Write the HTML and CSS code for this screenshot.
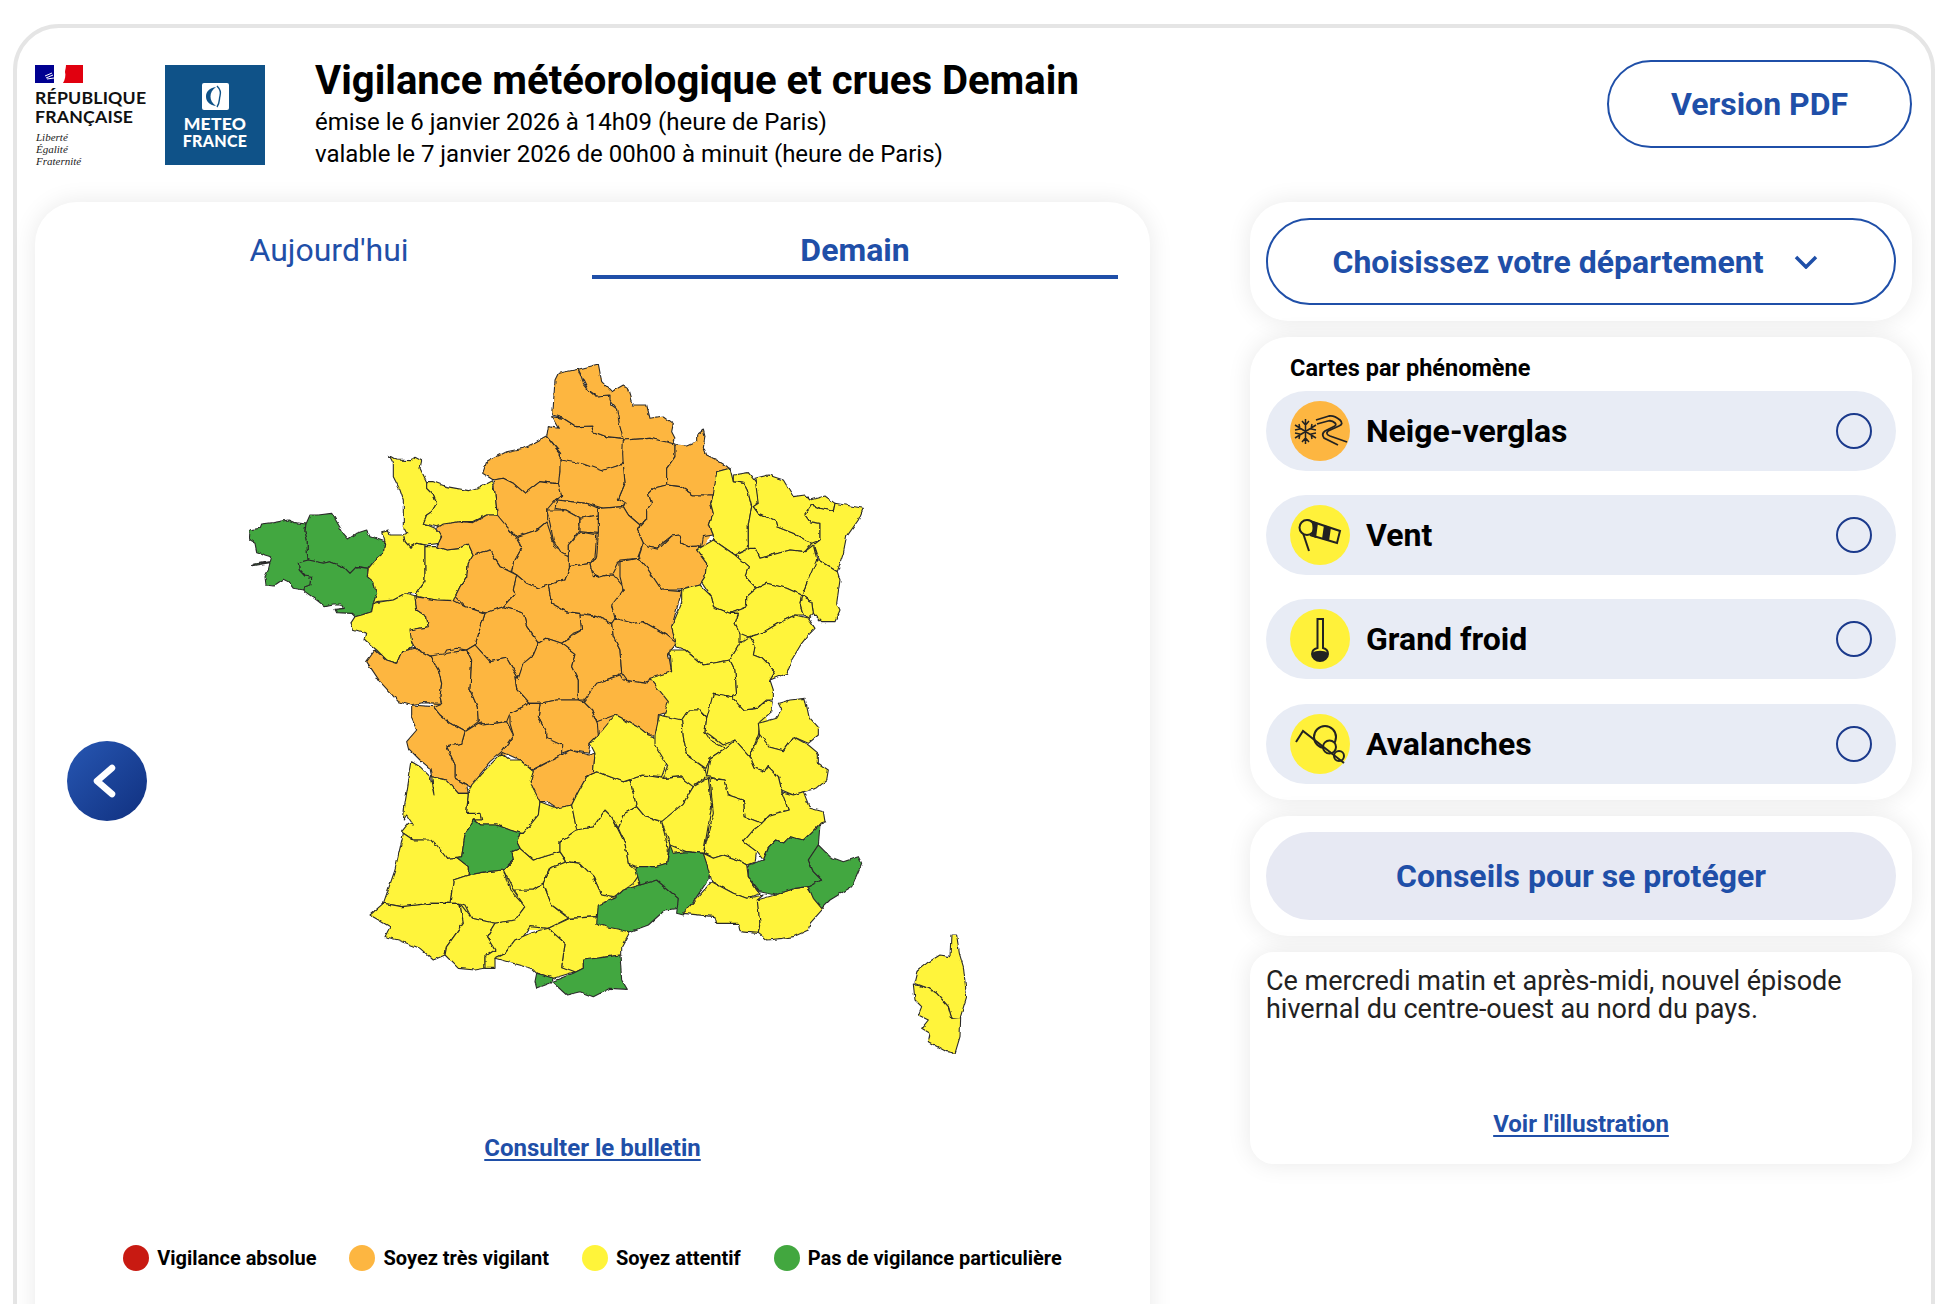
FILE: index.html
```html
<!DOCTYPE html>
<html lang="fr">
<head>
<meta charset="utf-8">
<title>Vigilance météorologique et crues Demain</title>
<link rel="stylesheet" href="styles.css">
</head>
<body>
<div class="frame">
  <header class="header">
    <div class="logo-rf">
      <svg class="flag" viewBox="0 0 48 18" width="48" height="18"><rect width="48" height="18" fill="#fff"/><rect width="19" height="18" fill="#000091"/><rect x="28" width="20" height="18" fill="#e1000f"/><path d="M19 18L22 13C19 12 20 9 21 7C21 3 23 0 27 0L31 0C31 3 30 5 30 7C31 10 30 15 28 18Z" fill="#fff"/><path d="M10 11L17 8M11 13L18 10M12 14L19 13" stroke="#fff" stroke-width="1" fill="none"/></svg>
      <div class="rf-name">RÉPUBLIQUE<br>FRANÇAISE</div>
      <div class="rf-motto">Liberté<br>Égalité<br>Fraternité</div>
    </div>
    <div class="logo-mf">
      <svg class="mf-mark" viewBox="0 0 27 27" width="27" height="27"><rect width="27" height="27" rx="2" fill="#fff"/><path d="M14 4C7 5 4 9 4 13.500C4 18 7 22 14 23C10 20 8.500 17 8.500 13.500C8.500 10 10 7 14 4Z" fill="#0f5288"/><path d="M15 3C19 7 19 10 18 13C17 16 18 20 15 24" stroke="#0f5288" stroke-width="1.400" fill="none"/></svg>
      <div class="mf-name">METEO<span class="mf-second">FRANCE</span></div>
    </div>
    <div class="titles">
      <h1 class="title">Vigilance météorologique et crues Demain</h1>
      <p class="sub">émise le 6 janvier 2026 à 14h09 (heure de Paris)</p>
      <p class="sub">valable le 7 janvier 2026 de 00h00 à minuit (heure de Paris)</p>
    </div>
    <a class="pdf-btn">Version PDF</a>
  </header>
  <main class="main">
    <section class="map-card">
      <nav class="tabs">
        <a class="tab">Aujourd'hui</a>
        <a class="tab tab-active">Demain</a>
      </nav>
      <button class="back" aria-label="Précédent"><svg viewBox="0 0 80 80" width="80" height="80"><path d="M45 27L30 40L45 53" fill="none" stroke="#fff" stroke-width="6.500" stroke-linecap="round" stroke-linejoin="round"/></svg></button>
      <svg class="map" viewBox="240 350 760 720" width="760" height="720">
        <defs><filter id="wiggle" x="0" y="0" width="100%" height="100%" filterUnits="objectBoundingBox"><feTurbulence type="fractalNoise" baseFrequency="0.14" numOctaves="2" seed="4"/><feDisplacementMap in="SourceGraphic" scale="3.500" xChannelSelector="R" yChannelSelector="G"/></filter></defs>
        <g filter="url(#wiggle)">
        <path class="under o" d="M530 480L600 420 680 460 720 520 660 620 650 720 560 750 460 760 420 680 440 600Z"/>
        <path class="under y" d="M430 830L520 880 650 800 690 720 720 640 790 540 830 540 770 610 755 680 770 730 780 830 700 870 620 920 560 930 430 930Z"/>
        <g transform="translate(230 340) scale(.33333)">
          <path class="g" d="M58 600L60 570 90 565 95 552 130 548 175 540 195 548 228 552 225 575 232 600 232 640 235 660 205 668 208 690 225 708 245 712 243 735 225 740 222 750 190 745 175 725 160 718 130 738 108 735 105 710 115 690 120 668 62 678 75 672 118 665 122 650 105 645 95 640 80 635 75 610Z"/>
          <path class="g" d="M228 552L240 525 265 525 305 520 320 545 340 580 355 597 380 580 410 570 420 590 465 605 460 640 440 655 415 685 390 680 380 680 360 700 340 680 300 665 280 670 235 660 232 640 232 600 225 575Z"/>
          <path class="g" d="M205 668L235 660 280 670 300 665 340 680 360 700 380 680 415 685 412 710 430 725 440 760 430 790 425 815 395 825 375 830 365 820 320 818 315 808 340 805 335 795 310 795 285 800 260 780 225 755 222 750 225 740 243 735 245 712 225 708 208 690Z"/>
          <path class="y" d="M478 347L500 360 540 362 555 352 575 362 570 385 590 425 590 445 610 465 620 490 605 515 590 525 580 550 615 565 635 585 628 610 590 615 560 610 540 622 525 605 520 585 530 580 520 560 520 480 510 450 490 410 490 370Z"/>
          <path class="y" d="M590 425L610 425 650 440 715 452 750 440 785 422 795 460 802 525 770 525 730 545 690 545 640 555 620 560 580 550 590 525 605 515 620 490 610 465 590 445Z"/>
          <path class="y" d="M455 575L475 570 480 585 520 585 525 605 540 622 560 610 585 615 585 700 585 725 560 760 525 762 490 780 440 785 430 790 440 760 430 725 412 710 415 685 440 655 460 640 465 605Z"/>
          <path class="y" d="M585 620L620 620 650 630 690 625 715 612 730 645 715 670 710 710 690 740 675 770 670 782 620 780 560 770 560 760 585 725 585 700Z"/>
          <path class="y" d="M362 850L375 830 395 825 425 815 430 790 490 780 525 762 555 770 560 810 590 830 595 860 545 870 555 900 545 925 525 932 515 935 500 970 470 960 440 930 405 900 410 880 370 868Z"/>
          <path class="o" d="M758 400L770 365 830 335 880 325 915 310 950 290 990 340 992 365 990 400 995 430 970 430 930 425 885 460 850 430 820 415 790 420Z"/>
          <path class="o" d="M950 290L955 260 985 265 965 230 1000 235 1040 260 1085 258 1090 275 1130 290 1180 295 1190 305 1180 370 1120 395 1060 375 990 365 992 340Z"/>
          <path class="o" d="M968 225L975 120 985 100 1045 88 1060 130 1080 155 1095 168 1140 165 1145 195 1165 210 1180 250 1180 295 1130 290 1090 275 1085 258 1040 260 1000 235Z"/>
          <path class="o" d="M790 420L820 415 850 430 885 460 930 425 970 430 995 430 995 465 975 480 950 510 950 545 920 570 860 590 800 530 802 525 795 460Z"/>
          <path class="o" d="M620 565L640 552 690 545 730 548 770 525 802 525 855 590 875 625 850 670 845 695 810 680 790 650 780 630 730 645 715 612 690 625 650 630 620 620 635 590Z"/>
          <path class="o" d="M860 590L920 570 950 545 965 590 975 620 1015 640 1020 680 1005 720 925 745 890 730 860 705 845 695 850 670 875 625Z"/>
          <path class="o" d="M730 645L780 630 790 650 810 680 860 705 850 750 855 760 820 800 770 820 705 800 675 770 690 740 710 710 715 670Z"/>
          <path class="o" d="M860 705L890 730 925 745 955 735 965 790 1010 815 1050 820 1055 870 1030 880 995 910 950 895 925 910 890 860 880 820 820 800 855 760 850 750Z"/>
          <path class="o" d="M955 735L1005 720 1020 680 1080 670 1090 710 1150 705 1180 740 1170 790 1145 800 1160 835 1145 850 1100 830 1050 820 1010 815 965 790Z"/>
          <path class="o" d="M765 820L820 800 880 820 890 860 925 910 910 950 880 975 865 1015 830 955 780 965 735 915Z"/>
          <path class="o" d="M555 770L620 780 670 782 705 800 765 820 735 915 710 930 680 925 650 930 640 948 600 948 555 925 545 905 540 870 595 860 590 830 560 810Z"/>
        </g>
        <g transform="translate(500 340) scale(.33333)">
          <path class="o" d="M235 88L295 72 305 125 335 155 370 135 385 145 400 195 440 195 450 235 490 228 520 250 515 275 525 295 520 312 450 295 370 300 360 260 350 205 330 180 330 165 290 168 265 150 250 120Z"/>
          <path class="o" d="M370 300L450 295 525 312 525 350 500 385 500 435 460 445 445 460 455 490 440 510 440 540 420 555 385 525 370 500 355 478 375 430 370 380 368 340Z"/>
          <path class="o" d="M525 315L560 318 590 305 590 285 610 270 615 290 610 320 620 345 650 360 690 385 650 395 650 440 640 465 580 465 540 440 500 435 500 385 525 350Z"/>
          <path class="o" d="M180 360L250 372 305 392 370 372 375 430 355 478 375 490 370 500 310 505 260 490 170 480 185 465 175 430 180 395Z"/>
          <path class="o" d="M170 480L260 490 295 505 295 525 240 535 195 510 165 505Z"/>
          <path class="o" d="M445 460L460 445 500 435 540 440 580 465 640 465 632 490 640 520 628 555 640 585 610 590 605 618 565 620 545 610 540 585 515 588 480 615 475 628 445 622 430 610 412 570 440 540 440 510 455 490Z"/>
          <path class="o" d="M295 505L370 500 385 525 420 555 412 570 430 610 412 655 360 660 340 700 295 712 275 690 270 670 290 650 295 580 295 525Z"/>
          <path class="o" d="M140 510L195 510 240 535 235 575 205 615 205 650 185 640 160 600 150 550Z"/>
          <path class="o" d="M240 575L290 585 285 650 270 670 205 680 205 650 205 615Z"/>
          <path class="o" d="M240 535L295 525 295 580 240 575Z"/>
          <path class="o" d="M430 610L445 622 475 628 515 588 540 585 545 610 565 620 605 618 590 630 620 670 615 710 600 735 540 750 485 750 445 690 415 655Z"/>
          <path class="o" d="M360 665L415 655 445 690 485 750 545 755 515 860 530 910 505 945 500 885 430 845 400 855 345 835 335 795 370 750 360 710Z"/>
          <path class="y" d="M650 395L690 385 700 425 735 430 745 460 755 500 745 555 745 605 750 625 705 645 640 600 640 585 628 555 640 520 632 490 640 465Z"/>
          <path class="y" d="M700 405L745 398 770 430 775 490 760 500 775 520 825 540 830 560 880 580 935 610 915 635 870 630 835 640 780 655 765 625 745 630 745 605 745 555 755 500 745 460 735 430 700 425Z"/>
          <path class="y" d="M765 415L805 405 850 420 880 470 915 465 930 480 975 468 1005 490 1000 515 960 505 935 495 915 525 930 545 960 550 960 600 935 610 880 580 830 560 825 540 775 520 760 500 775 490Z"/>
          <path class="y" d="M1005 490L1090 505 1075 540 1040 590 1030 640 1012 695 955 660 940 615 960 600 960 550 930 545 915 525 935 495 960 505 1000 515Z"/>
          <path class="y" d="M955 660L1012 695 1020 720 1010 790 1020 810 1005 845 965 845 940 820 935 785 905 765 920 730 940 660Z"/>
          <path class="y" d="M700 650L750 625 765 625 780 655 835 640 870 630 915 635 940 615 950 660 920 730 905 765 860 745 800 730 770 745 735 710 745 680Z"/>
          <path class="y" d="M590 630L640 600 705 645 745 680 735 710 770 745 740 770 740 800 690 820 640 800 635 770 605 725 615 710 620 670Z"/>
          <path class="y" d="M770 745L800 730 860 745 905 765 900 790 910 825 885 825 835 850 785 880 745 890 720 880 705 850 715 820 690 820 740 800 740 770Z"/>
          <path class="y" d="M905 765L935 785 940 820 925 835 910 825 900 790Z"/>
          <path class="y" d="M750 890L785 880 835 850 885 825 925 835 945 865 925 885 905 910 875 960 860 1000 810 1020 825 995 785 955 760 945 765 915Z"/>
          <path class="y" d="M545 750L600 735 635 770 640 800 690 820 715 820 705 850 720 880 720 910 690 960 610 975 555 930 530 920 515 860 545 790Z"/>
        </g>
        <g transform="translate(340 660) scale(.33333)">
          <path class="o" d="M105 -30L140 0 170 10 185 -25 195 -28 225 -35 270 -12 295 30 305 70 300 110 305 130 245 128 210 135 175 125 120 65 80 5Z"/>
          <path class="o" d="M270 -12L310 -18 350 -25 380 -30 395 0 390 90 412 140 415 185 375 215 330 190 300 165 280 140 305 130 300 110 305 70 295 30Z"/>
          <path class="o" d="M380 -30L405 -45 450 5 500 -5 535 55 525 50 530 85 570 130 510 160 500 185 430 195 415 185 412 140 390 90 395 0Z"/>
          <path class="o" d="M535 55L550 10 580 -15 595 -50 620 -65 665 -50 705 -20 695 20 715 60 715 120 650 120 600 130 570 130 530 85 525 50Z"/>
          <path class="o" d="M665 -50L700 -75 725 -90 720 -135 770 -130 815 -110 820 -70 840 -30 845 40 775 70 770 100 730 120 715 120 715 60 695 20 705 -20Z"/>
          <path class="o" d="M815 -110L825 -125 880 -110 910 -115 980 -75 1010 -50 985 -20 995 35 930 60 905 70 860 60 845 40 840 -30 820 -70Z"/>
          <path class="o" d="M730 125L770 70 840 45 850 60 920 70 930 55 985 115 985 155 955 165 950 225 925 225 900 205 825 165 770 185 755 150Z"/>
          <path class="o" d="M600 130L650 120 715 120 730 125 755 150 772 190 775 225 750 250 745 280 690 270 665 280 620 230 620 215 595 170Z"/>
          <path class="o" d="M510 160L570 130 600 130 595 170 620 215 620 235 665 255 665 285 575 330 540 300 485 275 520 225 510 190Z"/>
          <path class="o" d="M580 330L665 285 690 270 745 285 765 280 760 340 740 350 715 395 695 435 650 445 620 425 595 425 570 365Z"/>
          <path class="o" d="M375 215L415 190 430 195 500 185 520 225 485 275 450 305 420 340 410 375 390 380 345 355 345 315 320 260 365 250Z"/>
          <path class="o" d="M215 135L280 140 300 165 330 190 375 215 365 250 320 260 345 315 345 355 380 375 385 400 355 400 320 360 275 350 270 325 240 300 205 265 200 245 230 210 215 175Z"/>
          <path class="y" d="M215 305L240 320 270 350 282 405 275 350 320 360 355 400 385 400 380 460 420 460 425 480 400 480 375 525 365 590 340 595 320 595 285 555 245 540 220 540 190 520 185 515 205 490 220 495 200 465 190 480 195 430Z"/>
          <path class="y" d="M385 400L395 375 425 340 485 280 510 300 540 300 580 335 570 365 600 425 595 465 575 490 550 520 540 520 510 510 470 495 420 495 400 480 425 480 420 460 380 460Z"/>
          <path class="y" d="M190 520L220 540 275 540 290 555 320 595 350 592 385 620 385 645 340 660 330 730 270 730 215 740 185 740 130 730 165 630Z"/>
          <path class="y" d="M340 660L385 645 440 635 490 630 510 690 555 740 525 780 465 790 395 775 375 735 360 730 330 730Z"/>
          <path class="y" d="M130 730L185 740 270 730 360 730 370 790 320 860 315 885 280 900 240 865 175 840 135 830 150 800 90 765Z"/>
          <path class="y" d="M360 730L395 775 465 790 440 830 465 870 435 890 435 925 405 930 355 925 315 885 320 860 370 790Z"/>
          <path class="y" d="M465 790L525 780 555 740 520 690 580 690 610 670 635 735 685 775 635 800 625 805 570 800 550 830 525 840 495 880 465 895 465 925 435 925 435 890 465 870 440 830Z"/>
          <path class="y" d="M490 630L520 600 515 575 540 565 580 600 660 575 680 605 630 625 610 670 580 690 520 690Z"/>
          <path class="y" d="M540 520L550 520 595 465 600 425 650 445 695 435 710 510 660 545 660 575 580 600 540 565 530 545Z"/>
          <path class="y" d="M660 545L710 510 760 500 795 450 815 470 855 550 865 610 900 640 880 670 825 710 785 705 760 650 720 610 680 605 660 575Z"/>
          <path class="y" d="M695 435L715 395 740 350 770 335 850 365 870 360 890 440 855 460 835 505 815 470 795 450 760 500 710 510Z"/>
          <path class="y" d="M610 670L630 625 680 605 720 610 760 650 785 705 825 715 775 745 775 770 690 775 635 735Z"/>
          <path class="y" d="M635 800L690 775 775 770 870 815 845 860 845 885 805 890 730 905 730 925 700 940 665 920 675 850 625 805Z"/>
          <path class="y" d="M495 880L525 840 570 820 625 805 675 850 665 920 705 935 640 955 590 940 575 925 465 895Z"/>
          <path class="g" d="M635 965L700 940 730 925 730 900 805 890 840 885 845 960 862 988 810 985 760 1010 720 995 680 1005Z"/>
          <path class="g" d="M590 940L640 955 630 970 590 985 585 965Z"/>
          <path class="g" d="M400 480L420 495 470 495 510 510 540 520 530 545 540 565 515 575 520 600 490 630 440 635 385 645 385 620 350 592 365 590 375 525Z"/>
          <path class="y" d="M835 505L855 460 890 440 915 470 965 485 985 570 980 610 945 620 890 620 865 610 855 550Z"/>
          <path class="y" d="M850 365L910 345 975 355 1020 350 1060 380 1030 430 970 485 915 470 890 440 870 360Z"/>
          <path class="y" d="M765 280L750 250 775 225 825 165 900 205 925 225 945 230 980 310 965 350 910 345 850 365 770 335 760 340Z"/>
          <path class="y" d="M1105 355L1115 440 1090 580 1040 575 990 555 965 485 1030 430 1060 380Z"/>
          <path class="g" d="M775 735L825 715 850 690 900 675 950 660 1015 715 1015 745 975 750 925 795 870 815 800 800 770 790Z"/>
          <path class="g" d="M885 620L945 620 980 610 990 555 1000 580 1040 575 1090 580 1115 645 1070 710 1030 765 1010 760 1015 715 950 660 900 675Z"/>
        </g>
        <g transform="translate(600 660) scale(.33333)">
          <path class="y" d="M210 -30L255 -30 310 15 390 0 405 30 410 105 395 110 340 100 325 175 300 150 265 150 245 180 190 175 205 125 150 55 215 35Z"/>
          <path class="y" d="M165 225L178 165 245 180 250 230 260 285 315 325 320 350 280 380 240 350 190 355 205 320 165 255Z"/>
          <path class="y" d="M245 180L265 150 300 150 320 175 315 215 330 240 375 265 330 295 318 325 260 285 250 230Z"/>
          <path class="y" d="M320 175L340 100 395 110 430 150 470 145 500 120 520 125 515 155 480 185 475 225 450 290 405 240 370 255 330 225 315 215Z"/>
          <path class="y" d="M390 0L420 -50 450 -70 465 -45 460 -15 485 -5 525 35 510 60 520 90 520 120 500 120 470 145 430 150 395 110 410 105 405 30Z"/>
          <path class="y" d="M475 190L530 175 545 150 535 130 570 120 615 115 628 175 655 205 655 225 625 250 580 230 550 272 510 262 480 235Z"/>
          <path class="y" d="M450 290L480 225 510 262 550 272 580 230 625 255 655 280 655 310 685 330 680 360 650 385 610 395 580 405 545 390 535 350 505 320 495 335 465 325Z"/>
          <path class="y" d="M320 350L330 295 375 265 405 240 450 290 465 325 495 335 505 320 535 350 545 390 565 450 510 465 485 490 435 470 430 420 385 405 375 360Z"/>
          <path class="y" d="M485 490L510 465 565 450 545 395 580 405 610 395 630 445 670 455 675 485 660 490 640 515 610 540 570 530 550 550 530 540 505 565 490 600 470 575 430 545 460 510Z"/>
          <path class="y" d="M330 355L375 360 385 405 430 420 435 470 485 490 460 510 430 545 470 575 465 605 440 615 415 600 370 585 340 595 310 580 340 460Z"/>
          <path class="y" d="M310 580L340 595 370 585 415 600 440 615 445 650 480 700 440 715 400 700 335 665 320 610Z"/>
          <path class="y" d="M335 665L400 700 440 715 490 705 472 720 480 790 475 820 420 815 415 790 350 790 345 770 250 760 290 715Z"/>
          <path class="y" d="M472 720L525 705 585 685 620 680 670 745 630 790 625 810 580 830 550 835 500 840 475 820 480 790Z"/>
          <path class="g" d="M445 615L490 600 505 565 530 540 550 550 570 530 610 540 660 492 655 555 625 600 640 635 665 660 625 680 585 685 525 705 480 695 445 650Z"/>
          <path class="g" d="M655 555L690 590 730 605 775 590 785 610 755 680 690 720 665 745 640 715 625 680 665 660 640 635 625 600Z"/>
          <path class="y" d="M1050 890L1053 825 1070 825 1078 880 1090 920 1100 1010 1080 1075 1055 1075 1045 1040 1010 1000 985 985 945 970 955 930 980 910 1020 885Z"/>
          <path class="y" d="M940 972L985 985 1010 1000 1045 1040 1055 1075 1082 1072 1080 1130 1065 1180 1040 1175 985 1145 990 1120 965 1105 985 1080 955 1065 965 1040 945 1020Z"/>
        </g>
        </g>
      </svg>
      <a class="link link-bulletin">Consulter le bulletin</a>
      <ul class="legend">
        <li class="legend-item"><span class="dot dot-red"></span>Vigilance absolue</li>
        <li class="legend-item"><span class="dot dot-orange"></span>Soyez très vigilant</li>
        <li class="legend-item"><span class="dot dot-yellow"></span>Soyez attentif</li>
        <li class="legend-item"><span class="dot dot-green"></span>Pas de vigilance particulière</li>
      </ul>
    </section>
    <aside class="side">
      <section class="card">
        <button class="select">Choisissez votre département<svg class="chev" viewBox="0 0 24 14" width="24" height="14"><path d="M2 2L12 12L22 2" fill="none" stroke="currentColor" stroke-width="3.500"/></svg></button>
      </section>
      <section class="card card-list">
        <h2 class="list-title">Cartes par phénomène</h2>
        <div class="rows">
          <div class="row">
            <span class="ico ico-orange"><svg viewBox="0 0 60 60" width="60" height="60"><g stroke="#222" stroke-width="1.500" fill="none"><path d="M15.500 18V43M5 24L26 37M5 37L26 24M12 20L15.500 24L19 20M12 41L15.500 37L19 41M5 29L10 28L9 23M5 32L10 33L9 38M26 29L21 28L22 23M26 32L21 33L22 38"/><path d="M26 19L39 15Q44 14 50 19Q54 23 49 25L38 30Q35 33 40 35L57 41" stroke-width="1.800"/><path d="M27 23L38 20Q42 19 45 22Q47 24 44 25.500L35 30Q31 33 34 37L48 44" stroke-width="1.800"/></g></svg></span>
            <span class="row-label">Neige-verglas</span><span class="radio"></span>
          </div>
          <div class="row">
            <span class="ico ico-yellow"><svg viewBox="0 0 60 60" width="60" height="60"><path d="M13 28L19 46" stroke="#222" stroke-width="2" fill="none"/><path d="M17 15L50 26L47 38L20 30" fill="#fff13a" stroke="#222" stroke-width="2"/><circle cx="17" cy="22.500" r="7.500" fill="#fff13a" stroke="#222" stroke-width="2"/><path d="M21 15.500L28 18L26 33L21 31C23 26 23 20 21 15.500ZM34 20L41 22.500L39 36L32 34Z" fill="#222"/></svg></span>
            <span class="row-label">Vent</span><span class="radio"></span>
          </div>
          <div class="row">
            <span class="ico ico-yellow"><svg viewBox="0 0 60 60" width="60" height="60"><path d="M27.500 10H33V39C37 40 38 43 38 45C38 49 34 52 30 52C26 52 22 49 22 45C22 43 23 40 27.500 39Z" fill="none" stroke="#222" stroke-width="2"/><path d="M22 44C22 48 26 52 30 52C34 52 38 48 38 44C34 41 26 41 22 44Z" fill="#222"/></svg></span>
            <span class="row-label">Grand froid</span><span class="radio"></span>
          </div>
          <div class="row">
            <span class="ico ico-yellow"><svg viewBox="0 0 60 60" width="60" height="60"><g stroke="#222" stroke-width="2" fill="#fff13a"><circle cx="35" cy="23" r="11"/><circle cx="39.500" cy="33" r="6.500"/><circle cx="49" cy="42" r="5"/><path d="M6 28L13 17L54 49" fill="none"/></g></svg></span>
            <span class="row-label">Avalanches</span><span class="radio"></span>
          </div>
        </div>
      </section>
      <section class="card">
        <button class="advice">Conseils pour se protéger</button>
      </section>
      <section class="card card-text">
        <p class="bulletin">Ce mercredi matin et après-midi, nouvel épisode hivernal du centre-ouest au nord du pays.</p>
        <a class="link link-illus">Voir l'illustration</a>
      </section>
    </aside>
  </main>
</div>
</body>
</html>
```
FILE: styles.css
```css
html, body { height: 1304px; overflow: hidden; }
body { margin: 0; background: #fff; font-family: Roboto, "Liberation Sans", sans-serif; color: #000; }
h1, h2, p, ul { margin: 0; padding: 0; }
button { font-family: inherit; cursor: pointer; }
.frame { margin: 24px 17px 0 13px; height: 1500px; box-sizing: border-box; border: 4px solid #e5e5e5; border-radius: 46px; padding: 0 19px 0 18px; }
.header { display: flex; height: 174px; box-sizing: border-box; padding-top: 32px; align-items: flex-start; }
.logo-rf { width: 111px; margin-top: 5px; margin-right: 19px; }
.flag { display: block; }
.rf-name { font-family: Lato, sans-serif; font-weight: 700; font-size: 17.700px; line-height: 18.500px; margin-top: 6px; color: #111; letter-spacing: .2px; white-space: nowrap; }
.rf-motto { font-family: "Liberation Serif", serif; font-style: italic; font-size: 11px; line-height: 12px; margin-top: 5px; padding-left: 1px; color: #222; }
.logo-mf { width: 100px; height: 100px; margin-top: 5px; background: #0f5288; display: flex; flex-direction: column; align-items: center; padding-top: 18px; box-sizing: border-box; }
.mf-mark { display: block; }
.mf-name { font-family: Lato, sans-serif; font-weight: 900; font-size: 17.500px; line-height: 17px; color: #fff; text-align: center; margin-top: 5px; letter-spacing: .3px; }
.mf-second { display: block; font-size: 16px; }
.titles { margin-left: 50px; margin-top: -1px; }
.title { font-size: 40.100px; line-height: 44px; font-weight: 700; margin-bottom: 3px; white-space: nowrap; }
.sub { font-size: 24px; line-height: 32px; white-space: nowrap; }
.pdf-btn { margin-left: auto; width: 305px; height: 88px; box-sizing: border-box; border: 2px solid #1f4fa8; border-radius: 44px; display: flex; align-items: center; justify-content: center; color: #1f4fa8; font-size: 32px; font-weight: 700; }
.main { display: flex; justify-content: space-between; align-items: flex-start; }
.map-card { position: relative; width: 1115px; height: 1300px; box-sizing: border-box; background: #fff; border-radius: 42px; box-shadow: 0 0 24px rgba(0,0,0,.09); }
.tabs { display: flex; margin: 0 32px 0 31px; }
.tab { flex: 1; text-align: center; padding: 29px 0 6px; font-size: 32px; line-height: 38px; color: #1f4fa8; border-bottom: 4px solid transparent; }
.tab-active { font-weight: 700; border-bottom-color: #1f4fa8; }
.back { position: absolute; left: 32px; top: 539px; width: 80px; height: 80px; padding: 0; border: 0; border-radius: 50%; background: linear-gradient(135deg, #2757b3, #10307f); }
.back svg { display: block; }
.map { display: block; margin: 71px 0 0 205px; }
.o { fill: #fdb641; }
.y { fill: #fff43a; }
.g { fill: #42a73f; }
.map path { stroke: #2c2c2c; stroke-width: 1.100; vector-effect: non-scaling-stroke; stroke-linejoin: round; }
.map .under { stroke: none; }
.link { display: block; text-align: center; color: #1f4fa8; font-weight: 700; text-decoration: underline; text-underline-offset: 3px; }
.link-bulletin { font-size: 24px; line-height: 30px; margin-top: 63px; }
.legend { list-style: none; display: flex; justify-content: center; gap: 33px; margin-top: 82px; }
.legend-item { display: flex; align-items: center; gap: 8px; font-size: 20px; font-weight: 700; line-height: 26px; white-space: nowrap; }
.dot { width: 26px; height: 26px; border-radius: 50%; }
.dot-red { background: #c81a12; }
.dot-orange { background: #fdb641; }
.dot-yellow { background: #fff43a; }
.dot-green { background: #42a73f; }
.side { width: 662px; display: flex; flex-direction: column; gap: 16px; }
.card { background: #fff; border-radius: 38px; padding: 16px; box-shadow: 0 0 24px rgba(0,0,0,.09); }
.select { width: 630px; height: 87px; box-sizing: border-box; padding: 0 12px 0 0; display: flex; align-items: center; justify-content: center; gap: 30px; background: #fff; border: 2px solid #1f4fa8; border-radius: 44px; color: #1f4fa8; font-size: 32px; font-weight: 700; }
.chev { flex: none; }
.card-list { padding-bottom: 16.400px; }
.list-title { font-size: 23.500px; line-height: 30px; font-weight: 700; padding-left: 24px; margin-bottom: 8px; }
.rows { display: flex; flex-direction: column; gap: 24.200px; }
.row { height: 80px; background: #e8ecf5; border-radius: 40px; display: flex; align-items: center; padding: 0 16px 0 24px; }
.ico { width: 60px; height: 60px; border-radius: 50%; flex: none; }
.ico svg { display: block; }
.ico-orange { background: #fdb641; }
.ico-yellow { background: #fff13a; }
.row-label { font-size: 32px; font-weight: 700; margin-left: 16px; flex: 1; }
.radio { width: 32px; height: 32px; border: 2px solid #1b3a8c; border-radius: 50%; margin-right: 8px; }
.advice { display: block; width: 630px; height: 88px; border: 0; border-radius: 44px; background: #e7e9f3; color: #1f4fa8; font-size: 32px; font-weight: 700; }
.card-text { height: 212px; box-sizing: border-box; border-radius: 24px; padding: 15px 16px 0; display: flex; flex-direction: column; }
.bulletin { font-size: 27px; line-height: 28px; color: #222; height: 142px; }
.link-illus { font-size: 24px; line-height: 30px; }
```
